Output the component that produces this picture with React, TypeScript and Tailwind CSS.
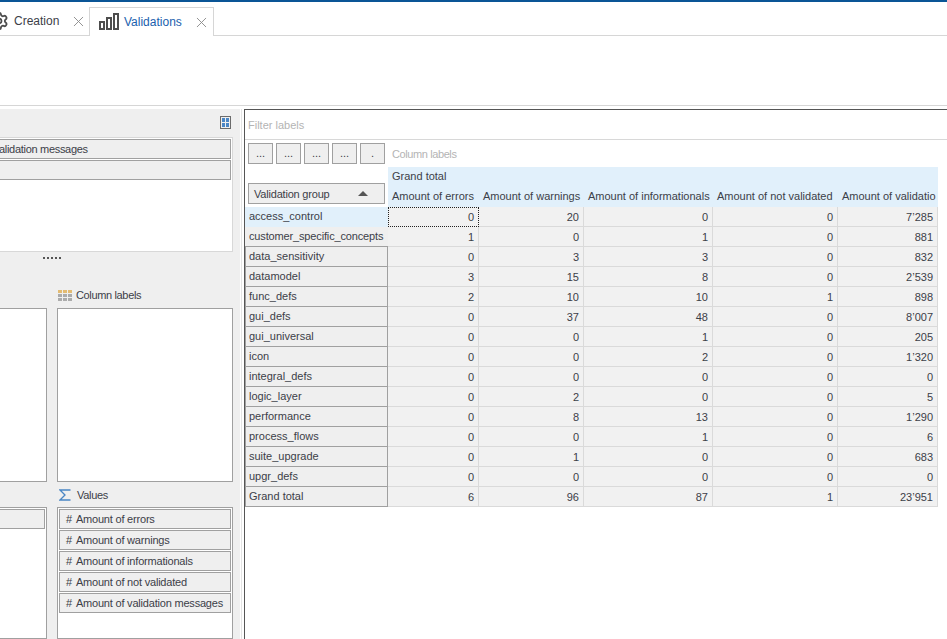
import { Settings, X } from 'lucide-react';

const rows = [
  ['access_control', '0', '20', '0', '0', "7'285"],
  ['customer_specific_concepts', '1', '0', '1', '0', '881'],
  ['data_sensitivity', '0', '3', '3', '0', '832'],
  ['datamodel', '3', '15', '8', '0', "2'539"],
  ['func_defs', '2', '10', '10', '1', '898'],
  ['gui_defs', '0', '37', '48', '0', "8'007"],
  ['gui_universal', '0', '0', '1', '0', '205'],
  ['icon', '0', '0', '2', '0', "1'320"],
  ['integral_defs', '0', '0', '0', '0', '0'],
  ['logic_layer', '0', '2', '0', '0', '5'],
  ['performance', '0', '8', '13', '0', "1'290"],
  ['process_flows', '0', '0', '1', '0', '6'],
  ['suite_upgrade', '0', '1', '0', '0', '683'],
  ['upgr_defs', '0', '0', '0', '0', '0'],
  ['Grand total', '6', '96', '87', '1', "23'951"],
];

const headers = ['Amount of errors', 'Amount of warnings', 'Amount of informationals', 'Amount of not validated', 'Amount of validatio'];

const values = ['Amount of errors', 'Amount of warnings', 'Amount of informationals', 'Amount of not validated', 'Amount of validation messages'];

function Chip({ children }: { children?: React.ReactNode }) {
  return (
    <div className="h-[20px] border border-[#a0a0a0] bg-[#efefef] pl-[6px] leading-[18px] whitespace-nowrap overflow-hidden tracking-[-0.2px]">
      {children}
    </div>
  );
}

function BarsIcon() {
  return (
    <svg width="21" height="17" viewBox="0 0 21 17" fill="none" stroke="#4d4d4d" strokeWidth="2" className="shrink-0">
      <rect x="1" y="9" width="4" height="7" />
      <rect x="8" y="5" width="4" height="11" />
      <rect x="15" y="1" width="4" height="15" />
    </svg>
  );
}

function PivotIcon() {
  return (
    <svg width="11" height="13" viewBox="0 0 11 13" fill="none">
      <rect x="0.5" y="0.5" width="10" height="12" stroke="#6b6b6b" />
      <rect x="2" y="2" width="3" height="4" fill="#4a86c5" />
      <rect x="6" y="2" width="3" height="4" fill="#4a86c5" />
      <rect x="2" y="7" width="3" height="4" fill="#4a86c5" />
      <rect x="6" y="7" width="3" height="4" fill="#4a86c5" />
    </svg>
  );
}

function ColumnsIcon() {
  return (
    <svg width="14" height="11" viewBox="0 0 14 11" className="shrink-0">
      <rect x="0" y="0" width="4" height="3" fill="#e3bb72" />
      <rect x="5" y="0" width="4" height="3" fill="#e3bb72" />
      <rect x="10" y="0" width="4" height="3" fill="#e3bb72" />
      <rect x="0" y="4" width="4" height="3" fill="#ababab" />
      <rect x="5" y="4" width="4" height="3" fill="#ababab" />
      <rect x="10" y="4" width="4" height="3" fill="#ababab" />
      <rect x="0" y="8" width="4" height="3" fill="#ababab" />
      <rect x="5" y="8" width="4" height="3" fill="#ababab" />
      <rect x="10" y="8" width="4" height="3" fill="#ababab" />
    </svg>
  );
}

function SigmaIcon() {
  return (
    <svg width="12" height="12" viewBox="0 0 12 12" fill="none" stroke="#4a86c5" strokeWidth="1.3" className="shrink-0">
      <path d="M11.5 1H1L6 6L1 11H11.5" />
    </svg>
  );
}

function LeftPanel() {
  return (
    <div className="w-[240px] shrink-0 bg-[#efefef] overflow-hidden">
      <div className="w-[243px] h-full ml-[-10px] pt-[7px] flex flex-col">
        <div className="h-[21px] shrink-0 flex justify-end pr-[2px]">
          <PivotIcon />
        </div>
        <div className="h-[115px] shrink-0 border border-[#d8d8d8] bg-white p-[1px] flex flex-col gap-[1px]">
          <Chip>
            <span className="tracking-[-0.3px]">alidation messages</span>
          </Chip>
          <Chip />
        </div>
        <div className="h-[12px] shrink-0 flex items-center gap-[2px] pl-[53px]">
          {[0, 1, 2, 3, 4].map((i) => (
            <span key={i} className="w-[2px] h-[2px] bg-[#555555]" />
          ))}
        </div>
        <div className="flex gap-[10px] flex-1 min-h-0">
          <div className="w-[57px] shrink-0 flex flex-col">
            <div className="h-[44px] shrink-0" />
            <div className="h-[174px] shrink-0 border border-[#a0a0a0] bg-white" />
            <div className="h-[25px] shrink-0" />
            <div className="flex-1 border border-[#a0a0a0] bg-white p-[1px]">
              <Chip />
            </div>
          </div>
          <div className="flex-1 min-w-0 flex flex-col">
            <div className="h-[44px] shrink-0 flex items-center gap-[4px] pt-[18px] pl-[1px]">
              <ColumnsIcon />
              <span className="tracking-[-0.35px] pt-[1px]">Column labels</span>
            </div>
            <div className="h-[174px] shrink-0 border border-[#a0a0a0] bg-white" />
            <div className="h-[25px] shrink-0 flex items-center gap-[6px] pt-[1px] pl-[2px]">
              <SigmaIcon />
              <span className="tracking-[-0.3px] pt-[1px]">Values</span>
            </div>
            <div className="flex-1 border border-[#a0a0a0] bg-white p-[1px] flex flex-col gap-[1px]">
              {values.map((v) => (
                <Chip key={v}>
                  <span className="mr-[4px]">#</span>
                  {v}
                </Chip>
              ))}
            </div>
          </div>
        </div>
      </div>
    </div>
  );
}

function rowHeadClass(i: number) {
  if (i === 0) return 'h-[20px] bg-[#e1f0fb] pl-[4px] leading-[18px] whitespace-nowrap';
  if (i === 1) return 'h-[20px] bg-[#efefef] border-b border-[#a0a0a0] pl-[4px] leading-[18px] whitespace-nowrap tracking-[-0.15px]';
  return 'h-[20px] bg-[#efefef] border-b border-r border-l border-[#a0a0a0] pl-[3px] leading-[18px] whitespace-nowrap';
}

function PivotTable() {
  return (
    <div className="grid w-[693px] grid-cols-[143px_91px_105px_129px_125px_100px]">
      <div className="row-span-2 h-[40px] flex items-end pl-[3px] pr-[3px] pb-[3px]">
        <div className="w-full h-[21px] border border-[#a0a0a0] bg-[#efefef] flex items-center justify-between pl-[5px] pr-[16px]">
          <span className="tracking-[-0.2px] pt-[1px]">Validation group</span>
          <span className="w-0 h-0 border-x-[5px] border-x-transparent border-b-[5px] border-b-[#555555]" />
        </div>
      </div>
      <div className="col-span-5 h-[20px] bg-[#e1f0fb] pl-[4px] leading-[18px]">Grand total</div>
      {headers.map((h) => (
        <div key={h} className="h-[20px] bg-[#e1f0fb] pl-[4px] leading-[18px] whitespace-nowrap overflow-hidden">
          {h}
        </div>
      ))}
      {rows.map((r, i) => (
        <div key={r[0]} className="contents">
          <div className={rowHeadClass(i)}>{r[0]}</div>
          {r.slice(1).map((v, j) => (
            <div
              key={j}
              className={
                i === 0 && j === 0
                  ? 'h-[20px] bg-[#f1f1f1] border border-dotted border-[#222222] pr-[4px] text-right leading-[18px]'
                  : 'h-[20px] bg-[#f1f1f1] border-b border-r border-[#dadada] pr-[4px] text-right leading-[20px]'
              }
            >
              {v.replace("'", '\u2019')}
            </div>
          ))}
        </div>
      ))}
    </div>
  );
}

export default function App() {
  return (
    <div className="w-[947px] h-[639px] overflow-hidden bg-white flex flex-col text-[11px] text-[#3c4048] font-['Liberation_Sans',sans-serif]">
      <div className="h-[2px] shrink-0 bg-[#0a5596]" />
      <div className="h-[34px] shrink-0 border-b border-[#d6d6d6] flex items-end">
        <div className="w-[89px] h-[28px] flex items-center overflow-hidden text-[12px]">
          <Settings size={20} strokeWidth={2.2} color="#4d4d4d" className="ml-[-11px] shrink-0" />
          <span className="ml-[5px]">Creation</span>
          <X size={17} strokeWidth={1.3} color="#8a8a8a" className="ml-[11px] shrink-0" />
        </div>
        <div className="w-[125px] h-[29px] mb-[-1px] border border-b-0 border-[#d6d6d6] bg-white flex items-center pl-[9px] pb-[1px] text-[12px] text-[#1b5fae]">
          <BarsIcon />
          <span className="ml-[4px]">Validations</span>
          <X size={17} strokeWidth={1.3} color="#8a8a8a" className="ml-[11px] mt-[2px] shrink-0" />
        </div>
      </div>
      <div className="h-[70px] shrink-0 border-b border-[#d6d6d6]" />
      <div className="flex-1 min-h-0 flex pt-[3px]">
        <LeftPanel />
        <div className="w-[4px] shrink-0 pl-[1px]">
          <div className="w-[1px] h-full bg-[#e4e4e4]" />
        </div>
        <div className="flex-1 border-l border-t border-[#555555] flex flex-col">
          <div className="h-[30px] shrink-0 border-b border-[#d8d8d8] pl-[3px] leading-[30px] text-[#b4b4b4]">Filter labels</div>
          <div className="h-[27px] shrink-0 flex items-center gap-[3px] pl-[3px]">
            {['...', '...', '...', '...', '.'].map((t, i) => (
              <div key={i} className="w-[25px] h-[21px] border border-[#a0a0a0] bg-[#efefef] text-center leading-[19px]">
                {t}
              </div>
            ))}
            <span className="ml-[4px] pt-[1px] text-[#b4b4b4] tracking-[-0.4px]">Column labels</span>
          </div>
          <PivotTable />
        </div>
      </div>
    </div>
  );
}
